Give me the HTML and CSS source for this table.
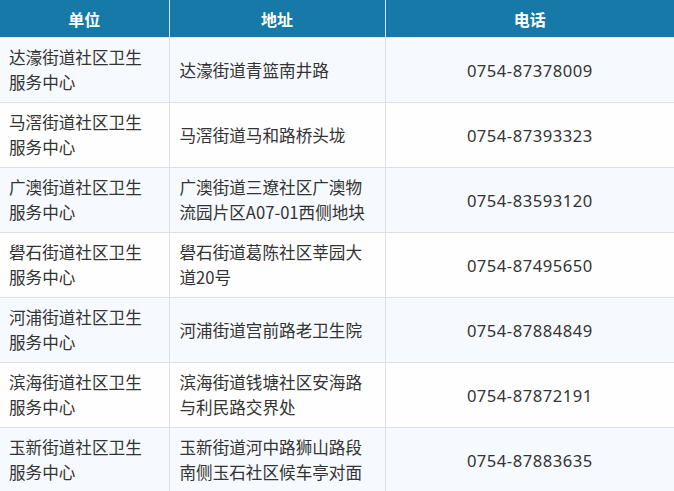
FILE: index.html
```html
<!DOCTYPE html>
<html lang="zh">
<head>
<meta charset="utf-8">
<link rel="stylesheet" href="styles.css">
</head>
<body>
<table class="tbl">
  <colgroup>
    <col class="c1">
    <col class="c2">
    <col class="c3">
  </colgroup>
  <thead>
    <tr><th>单位</th><th>地址</th><th>电话</th></tr>
  </thead>
  <tbody>
    <tr><td>达濠街道社区卫生服务中心</td><td>达濠街道青篮南井路</td><td class="tel">0754-87378009</td></tr>
    <tr><td>马滘街道社区卫生服务中心</td><td>马滘街道马和路桥头垅</td><td class="tel">0754-87393323</td></tr>
    <tr><td>广澳街道社区卫生服务中心</td><td>广澳街道三遼社区广澳物流园片区A07-01西侧地块</td><td class="tel">0754-83593120</td></tr>
    <tr><td>礐石街道社区卫生服务中心</td><td>礐石街道葛陈社区莘园大道20号</td><td class="tel">0754-87495650</td></tr>
    <tr><td>河浦街道社区卫生服务中心</td><td>河浦街道宫前路老卫生院</td><td class="tel">0754-87884849</td></tr>
    <tr><td>滨海街道社区卫生服务中心</td><td>滨海街道钱塘社区安海路与利民路交界处</td><td class="tel">0754-87872191</td></tr>
    <tr><td>玉新街道社区卫生服务中心</td><td>玉新街道河中路狮山路段南侧玉石社区候车亭对面</td><td class="tel">0754-87883635</td></tr>
  </tbody>
</table>
</body>
</html>
```
FILE: styles.css
```css
html, body {
  margin: 0;
  padding: 0;
  background: #ffffff;
}
body {
  font-family: "Noto Sans CJK SC", "Noto Sans", sans-serif;
  color: #333333;
}
.tbl {
  width: 674px;
  border-collapse: collapse;
  table-layout: fixed;
}
.c1 { width: 169px; }
.c2 { width: 216px; }
.c3 { width: 289px; }
.tbl th {
  height: 37px;
  padding: 0;
  background: #1779a8;
  color: #ffffff;
  font-size: 16px;
  font-weight: 700;
  text-align: center;
  vertical-align: middle;
  border-left: 1px solid #cfe6f2;
  border-bottom: 1px solid #d6eef8;
}
.tbl th:first-child { border-left: none; }
.tbl td {
  height: 64px;
  padding: 0 6px 0 10px;
  font-size: 16.6px;
  line-height: 25px;
  vertical-align: middle;
  text-align: left;
  border-left: 1px solid #dcdfe3;
  border-bottom: 1px solid #dcdfe3;
  word-break: break-all;
}
.tbl td:first-child { border-left: none; padding-left: 9px; padding-right: 14px; }
.tbl td.tel {
  text-align: center;
  padding: 0;
  font-family: "Noto Sans", "Noto Sans CJK SC", sans-serif;
  letter-spacing: 0.5px;
}
.tbl tbody tr:nth-child(odd) td { background: #f6f9fd; }
.tbl tbody tr:nth-child(even) td { background: #fefefe; }
```
